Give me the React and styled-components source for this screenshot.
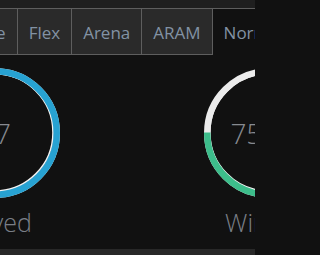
import React from "react";
import styled, { createGlobalStyle } from "styled-components";

const Global = createGlobalStyle`
  html, body { margin: 0; padding: 0; background: #111111; overflow: hidden; }
  body { font-family: "Open Sans", "DejaVu Sans", sans-serif; }
`;

const Page = styled.div`
  width: 255px;
  height: 255px;
  overflow: hidden;
  display: flex;
  flex-direction: column;
  background: #111111;
`;

const TopStrip = styled.div`
  height: 8px;
  flex: none;
  background: #1f1f1f;
`;

const TabBar = styled.div`
  display: flex;
  flex: none;
  margin-left: -97px;
  white-space: nowrap;
`;

const Tab = styled.div`
  flex: none;
  padding: 12px 11px 10px;
  line-height: 23px;
  font-size: 17px;
  color: #8292a4;
  background: ${(p) => (p.$active ? "#111111" : "#2a2a2a")};
  border-top: 1px solid #5e5e5e;
  border-bottom: 1px solid ${(p) => (p.$active ? "transparent" : "#5e5e5e")};
  border-right: 1px solid #5e5e5e;
`;

const StatsRow = styled.div`
  display: flex;
  flex: none;
  margin-left: -142px;
  margin-top: 12px;
`;

const Stat = styled.div`
  flex: none;
  width: 274px;
  display: flex;
  flex-direction: column;
  align-items: center;
`;

const RingWrap = styled.div`
  position: relative;
  width: 132px;
  height: 132px;
`;

const RingValue = styled.div`
  position: absolute;
  inset: 0;
  display: flex;
  align-items: center;
  justify-content: center;
  font-size: 28px;
  font-weight: 300;
  color: #878a90;
  white-space: nowrap;
`;

const Label = styled.div`
  margin-top: 6px;
  font-size: 25px;
  font-weight: 300;
  line-height: 34px;
  color: #7a7f87;
  white-space: nowrap;
`;

const BottomBand = styled.div`
  margin-top: auto;
  height: 6px;
  flex: none;
  background: #282828;
`;

function Ring({ value, color, pct }) {
  const r = 61.75;
  const c = 2 * Math.PI * r;
  return (
    <RingWrap>
      <svg width="132" height="132" viewBox="0 0 132 132">
        <circle cx="65.4" cy="65.4" r="58.6" fill="none" stroke="#f2f2f2" strokeWidth="1.6" />
        <circle cx="66" cy="66" r={r} fill="none" stroke="#ececec" strokeWidth="6.5" />
        <circle
          cx="66"
          cy="66"
          r={r}
          fill="none"
          stroke={color}
          strokeWidth="6.5"
          strokeDasharray={`${c * pct} ${c}`}
          transform="rotate(-90 66 66)"
        />
      </svg>
      <RingValue>{value}</RingValue>
    </RingWrap>
  );
}

const tabs = ["Solo Queue", "Flex", "Arena", "ARAM", "Normal"];

export default function App() {
  return (
    <>
      <Global />
      <Page>
        <TopStrip />
        <TabBar>
          {tabs.map((t) => (
            <Tab key={t} $active={t === "Normal"}>
              {t}
            </Tab>
          ))}
        </TabBar>
        <StatsRow>
          <Stat>
            <Ring value="27" color="#27a2d2" pct={1} />
            <Label>Played</Label>
          </Stat>
          <Stat>
            <Ring value="75.0%" color="#3dbd8b" pct={0.75} />
            <Label>Winrate</Label>
          </Stat>
        </StatsRow>
        <BottomBand />
      </Page>
    </>
  );
}
